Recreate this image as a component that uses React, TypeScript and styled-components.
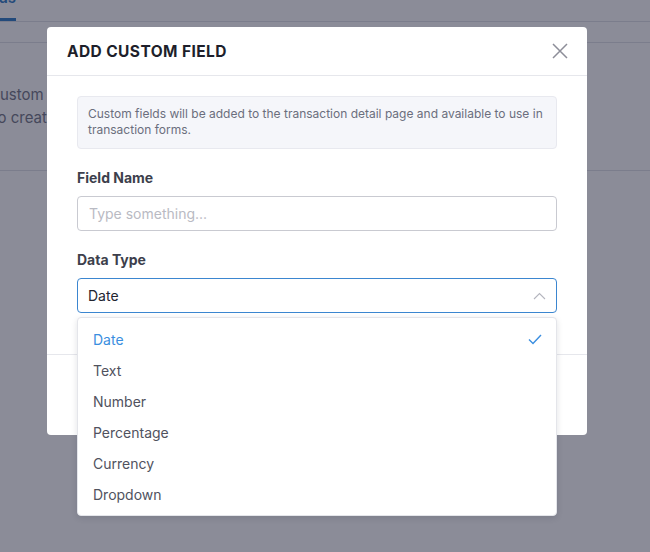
import React from "react";
import styled, { createGlobalStyle } from "styled-components";

const Global = createGlobalStyle`
  html, body { margin: 0; padding: 0; }
  body {
    width: 650px; height: 552px; overflow: hidden;
    font-family: Inter, Roboto, "Liberation Sans", Arial, sans-serif;
    background: #ffffff;
  }
  * { box-sizing: border-box; }
`;

const Page = styled.div`
  position: relative;
  width: 650px;
  height: 552px;
  overflow: hidden;
  background: #ffffff;
`;

const TabBar = styled.div`
  margin-top: -14px;
  height: 36px;
  border-bottom: 1px solid #dfe0e6;
`;

const TabList = styled.div`
  width: 16px;
  display: flex;
  justify-content: flex-end;
`;

const Tab = styled.div<{ $active?: boolean }>`
  flex-shrink: 0;
  height: 35px;
  padding-top: 2px;
  font-size: 15px;
  font-weight: 600;
  white-space: nowrap;
  color: ${(p) => (p.$active ? "#2f7bc4" : "#555")};
  border-bottom: 3px solid ${(p) => (p.$active ? "#2f7bc4" : "transparent")};
`;

const SubBar = styled.div`
  height: 21px;
  border-bottom: 1px solid #dfe0e6;
`;

const Intro = styled.div`
  height: 128px;
  border-bottom: 1px solid #dfe0e6;
  padding-top: 40px;
`;

const IntroText = styled.div`
  width: 47px;
  overflow: hidden;
  font-size: 15px;
  line-height: 23px;
  color: #737685;
  white-space: nowrap;
`;

const IntroLine = styled.span`
  display: block;
  margin-left: -11px;
`;

const Overlay = styled.div`
  position: absolute;
  inset: 0;
  background: rgba(24, 26, 50, 0.5);
  padding: 27px 0 0 47px;
`;

const Modal = styled.div`
  position: relative;
  width: 540px;
  height: 408px;
  background: #ffffff;
  border-radius: 4px;
  display: flex;
  flex-direction: column;
`;

const Header = styled.div`
  height: 49px;
  display: flex;
  align-items: center;
  justify-content: space-between;
  padding: 0 20px;
  border-bottom: 1px solid #e6e7ec;
`;

const Title = styled.h2`
  margin: 0;
  font-size: 15.5px;
  letter-spacing: 0.4px;
  font-weight: 700;
  color: #1e1f2b;
`;

const CloseButton = styled.button`
  border: none;
  background: none;
  padding: 0;
  width: 17px;
  height: 17px;
  display: flex;
  align-items: center;
  justify-content: center;
  cursor: pointer;
  margin-right: -1px;
`;

const Body = styled.div`
  padding: 20px 30px 0;
  display: flex;
  flex-direction: column;
`;

const Info = styled.div`
  background: #f5f6fa;
  border: 1px solid #e8e9ef;
  border-radius: 4px;
  padding: 9px 10px 10px;
  font-size: 12px;
  line-height: 16px;
  color: #6b6e7d;
  margin-bottom: 20px;
`;

const Label = styled.label`
  display: block;
  font-size: 14px;
  font-weight: 700;
  color: #3d3f4c;
  margin-bottom: 10px;
  line-height: 17px;
`;

const Input = styled.input`
  width: 100%;
  height: 35px;
  border: 1px solid #c9cad1;
  border-radius: 4px;
  padding: 0 11px;
  font-family: inherit;
  font-size: 14px;
  color: #222;
  outline: none;
  margin-bottom: 20px;
  &::placeholder { color: #b9bac3; }
`;

const SelectWrap = styled.div`
  position: relative;
`;

const SelectBox = styled.div`
  height: 35px;
  border: 1px solid #3b86d0;
  border-radius: 4px;
  padding: 0 10px 0 10px;
  display: flex;
  align-items: center;
  justify-content: space-between;
  font-size: 14px;
  color: #222430;
`;

const Menu = styled.ul`
  position: absolute;
  top: 39px;
  left: 0;
  right: 0;
  margin: 0;
  padding: 6px 0 5px;
  list-style: none;
  background: #ffffff;
  border: 1px solid #e4e5ea;
  border-radius: 4px;
  box-shadow: 0 2px 6px rgba(20, 22, 40, 0.12);
  z-index: 2;
`;

const Item = styled.li<{ $selected?: boolean }>`
  height: 31px;
  display: flex;
  align-items: center;
  justify-content: space-between;
  padding: 0 14px 0 15px;
  font-size: 14px;
  color: ${(p) => (p.$selected ? "#3a8ee0" : "#50525e")};
`;

const Footer = styled.div`
  margin-top: auto;
  height: 81px;
  border-top: 1px solid #e6e7ec;
`;

const ChevronUp = () => (
  <svg width="13" height="8" viewBox="0 0 13 8" fill="none">
    <path d="M1 7L6.5 1.5L12 7" stroke="#b4b5be" strokeWidth="1.1" />
  </svg>
);

const Check = () => (
  <svg width="14" height="11" viewBox="0 0 14 11" fill="none">
    <path d="M1 5.5L5 9.5L13 1" stroke="#3a8ee0" strokeWidth="1.4" />
  </svg>
);

const CloseIcon = () => (
  <svg width="16" height="16" viewBox="0 0 16 16" fill="none">
    <path d="M1 1L15 15M15 1L1 15" stroke="#8d8e99" strokeWidth="1.5" />
  </svg>
);

const options = ["Date", "Text", "Number", "Percentage", "Currency", "Dropdown"];

export default function App() {
  return (
    <>
      <Global />
      <Page>
        <TabBar>
          <TabList>
            <Tab $active>Custom Fields</Tab>
          </TabList>
        </TabBar>
        <SubBar />
        <Intro>
          <IntroText>
            <IntroLine>Custom fields</IntroLine>
            <IntroLine>To create</IntroLine>
          </IntroText>
        </Intro>
        <Overlay>
          <Modal>
            <Header>
              <Title>ADD CUSTOM FIELD</Title>
              <CloseButton aria-label="Close">
                <CloseIcon />
              </CloseButton>
            </Header>
            <Body>
              <Info>
                Custom fields will be added to the transaction detail page and available to use in transaction forms.
              </Info>
              <Label>Field Name</Label>
              <Input placeholder="Type something..." />
              <Label>Data Type</Label>
              <SelectWrap>
                <SelectBox>
                  <span>Date</span>
                  <ChevronUp />
                </SelectBox>
                <Menu>
                  {options.map((o) => (
                    <Item key={o} $selected={o === "Date"}>
                      <span>{o}</span>
                      {o === "Date" && <Check />}
                    </Item>
                  ))}
                </Menu>
              </SelectWrap>
            </Body>
            <Footer />
          </Modal>
        </Overlay>
      </Page>
    </>
  );
}
